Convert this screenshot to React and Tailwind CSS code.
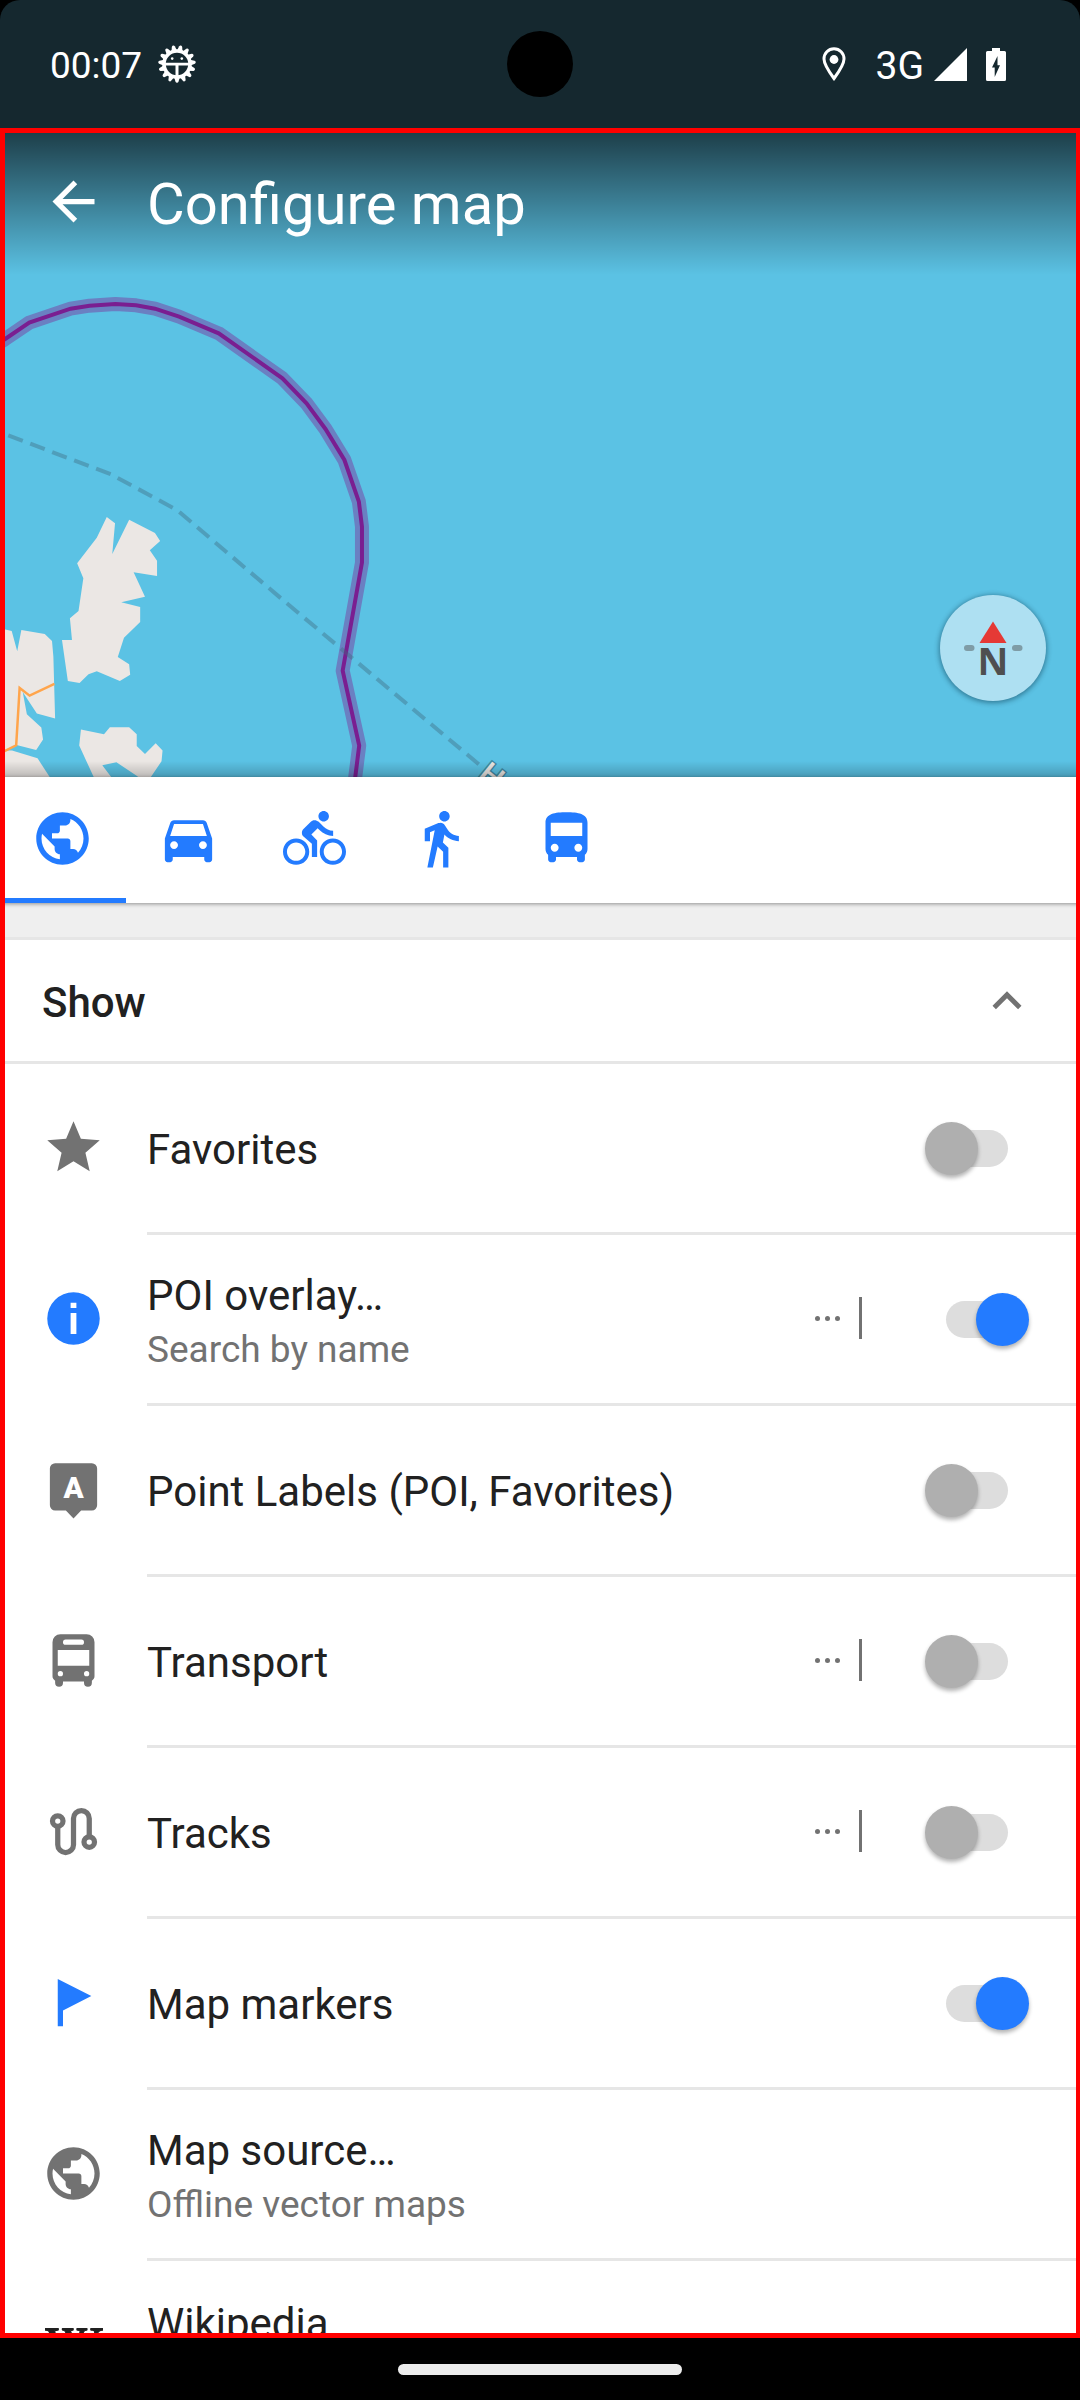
import { useState } from "react";
import {
  MdArrowBack,
  MdStar,
  MdPublic,
  MdDirectionsCar,
  MdDirectionsBike,
  MdDirectionsWalk,
  MdDirectionsBus,
  MdExpandLess,
} from "react-icons/md";
import { SiWikipedia } from "react-icons/si";

function BugIcon() {
  const teeth = Array.from({ length: 15 }, (_, i) => 90 + i * 24);
  return (
    <svg viewBox="0 0 38 38" className="size-[38px]" fill="#fff" aria-hidden="true">
      {teeth.map((a) => (
        <path key={a} d="M31 15.800L36.800 17.500a1.600 1.600 0 0 1 0 3L31 22.200z" transform={"rotate(" + a + " 19 19)"} />
      ))}
      <circle cx="19" cy="19" r="13" fill="none" stroke="#fff" strokeWidth="3.600" />
      <path d="M7 17.800h24v2.600H20.500V32h-3V20.400H7z" />
      <circle cx="14.200" cy="13.600" r="1.300" />
      <circle cx="23.800" cy="13.600" r="1.300" />
    </svg>
  );
}

function StatusBar() {
  return (
    <header className="relative flex h-[128px] shrink-0 items-center justify-between rounded-t-[20px] bg-[#15282f] pr-[74px] pb-[42px] pl-[50px] pt-[42px] text-white">
      <div className="flex items-center gap-4">
        <span className="pt-1 text-[37px] leading-[44px]">00:07</span>
        <BugIcon />
      </div>
      <div className="absolute left-1/2 top-[31px] size-[66px] -translate-x-1/2 rounded-full bg-black" />
      <div className="flex items-center">
        <svg viewBox="0 0 24 34" className="mr-[30px] h-[34px] w-6" aria-hidden="true">
          <path d="M12 1.800C6.300 1.800 2 6.300 2 12c0 5.600 4.500 12 10 19.500C17.500 24 22 17.600 22 12 22 6.300 17.700 1.800 12 1.800z" fill="none" stroke="#fff" strokeWidth="3" />
          <circle cx="12" cy="12.500" r="4.400" fill="#fff" />
        </svg>
        <span className="mr-[10px] pt-1 text-[39px] leading-[44px]">3G</span>
        <svg viewBox="0 0 33 33" className="mr-[19px] size-[33px]" aria-hidden="true">
          <path d="M0 33L33 0v33z" fill="#fff" />
        </svg>
        <svg viewBox="0 0 20 33" className="h-[33px] w-5" aria-hidden="true">
          <path d="M6 0h8v3h4.500A1.500 1.500 0 0 1 20 4.500v27a1.500 1.500 0 0 1-1.500 1.500h-17A1.500 1.500 0 0 1 0 31.500v-27A1.500 1.500 0 0 1 1.500 3H6z" fill="#fff" />
          <path d="M11.500 8v9.300H14L8.700 29v-9.500H6z" fill="#15282f" />
        </svg>
      </div>
    </header>
  );
}

const BORDER =
  "M-20 200L15 177 85 128 205 86 260 77 335 72 395 76 450 86 520 110 635 160 820 295 890 370 945 447 1000 540 1042 665 1051 740 1051 848 995 1172 1043 1397 1028 1520";

function MapCanvas() {
  return (
    <svg viewBox="0 0 1080 649" preserveAspectRatio="xMinYMin slice" className="h-full w-full" aria-hidden="true">
      <rect width="2400" height="1400" fill="#5bc2e4" />
      <g transform="translate(0 152) scale(0.3444 0.3333)">
        <g fill="#ebe7e4">
          <path d="M310 711L334 730 326 822 375 719 450 759 465 783 435 811 456 842V888L388 877 421 950 352 967 407 981V1026L360 1073 342 1131 375 1153 378 1184 348 1203 281 1174 257 1183 231 1209 197 1203 180 1080H209L203 1015 228 993 242 895 224 850 281 773z" />
          <path d="M0 1045L34 1053 50 1114 62 1050 130 1062 151 1083 155 1130 160 1316 107 1301 66 1236 78 1303 120 1343 125 1379 105 1410 48 1395 15 1410H0z" />
          <path d="M0 1412H35L109 1435 146 1494V1520H0z" />
          <path d="M235 1349L302 1363 319 1342H375L397 1363V1398L421 1422 452 1390 472 1412 469 1444 440 1488 420 1520H400V1490L338 1447 297 1456 325 1494V1520H285L230 1397z" />
        </g>
        <path d="M0 1420L47 1396 57 1224 86 1247 158 1212" fill="none" stroke="#ffa54c" strokeWidth="2.500" vectorEffect="non-scaling-stroke" />
        <path d={BORDER} fill="none" stroke="#6a80c2" strokeWidth="14" strokeLinejoin="round" vectorEffect="non-scaling-stroke" />
        <path d={BORDER} fill="none" stroke="#7a1e91" strokeWidth="4" vectorEffect="non-scaling-stroke" />
        <path d="M24 466L322 583 514 690 810 950 1410 1470" fill="none" stroke="#3f6a7d" strokeOpacity="0.400" strokeWidth="4" strokeDasharray="15.500 8" vectorEffect="non-scaling-stroke" />
      </g>
      <text x="477" y="649" transform="rotate(39 477 649)" fontFamily="Roboto, sans-serif" fontSize="30" fontWeight="500" fill="#ebe7e4" stroke="#3e8aa3" strokeWidth="3" paintOrder="stroke">
        H
      </text>
    </svg>
  );
}

function Compass() {
  return (
    <button type="button" aria-label="Rotate map north" className="absolute right-[34px] bottom-[76px] size-[106px] rounded-full bg-[#aee0f2] shadow-[0_1px_5px_1px_rgba(0,40,60,0.45)]">
      <svg viewBox="0 0 106 106" className="size-full" aria-hidden="true">
        <path d="M53 26.500L66.500 48h-27z" fill="#e53935" />
        <rect x="24" y="50" width="10.500" height="6" rx="3" fill="#7f9ca6" />
        <rect x="72" y="50" width="10.500" height="6" rx="3" fill="#7f9ca6" />
        <text x="53" y="80" textAnchor="middle" fontFamily="Open Sans, sans-serif" fontWeight="700" fontSize="38" fill="#4f4f4f">
          N
        </text>
      </svg>
    </button>
  );
}

const glyph = "size-[63px] shrink-0";

function InfoIcon() {
  return (
    <svg viewBox="0 0 24 24" className={glyph} fill="currentColor" aria-hidden="true">
      <path fillRule="evenodd" d="M12 2a10 10 0 1 0 0 20a10 10 0 1 0 0-20zM10.900 6h2.200v2h-2.200zM10.900 9.900h2.200v8h-2.200z" />
    </svg>
  );
}

function LabelIcon() {
  return (
    <svg viewBox="0 0 24 24" className={glyph} aria-hidden="true">
      <path d="M5 2h14a2 2 0 0 1 2 2v14a2 2 0 0 1-2 2h-4.100L12 23l-2.900-3H5a2 2 0 0 1-2-2V4a2 2 0 0 1 2-2z" fill="currentColor" />
      <text x="12" y="15.100" textAnchor="middle" fontFamily="Roboto, sans-serif" fontWeight="900" fontSize="11.300" fill="#fff">
        A
      </text>
    </svg>
  );
}

function TransportIcon() {
  return (
    <svg viewBox="0 0 24 24" className={glyph} fill="currentColor" aria-hidden="true">
      <path
        fillRule="evenodd"
        d="M7 2h10a3 3 0 0 1 3 3v13c0 .8-.4 1.300-1 1.700v.8a1.500 1.500 0 0 1-3 0V20H8v.5a1.500 1.500 0 0 1-3 0v-.8c-.6-.4-1-.9-1-1.700V5a3 3 0 0 1 3-3zM9 4a1 1 0 0 0 0 2h6a1 1 0 0 0 0-2zM6 8v6h12V8zM7 16a1 1 0 1 0 0 2a1 1 0 1 0 0-2zM17 16a1 1 0 1 0 0 2a1 1 0 1 0 0-2z"
      />
    </svg>
  );
}

function TracksIcon() {
  return (
    <svg viewBox="0 0 24 24" className={glyph} fill="none" stroke="currentColor" strokeWidth="2" aria-hidden="true">
      <circle cx="6" cy="8" r="2" />
      <circle cx="18" cy="16" r="2" />
      <path d="M6 10v7a3 3 0 0 0 6 0V7a3 3 0 0 1 6 0v7" />
    </svg>
  );
}

function FlagIcon() {
  return (
    <svg viewBox="0 0 24 24" className={glyph} fill="currentColor" aria-hidden="true">
      <path d="M6 3l12.800 6.500L8 15v6H6z" />
    </svg>
  );
}

function Switch({ id, checked, onChange }) {
  return (
    <input
      id={id}
      type="checkbox"
      role="switch"
      checked={checked}
      onChange={onChange}
      className="relative h-[53px] w-[104px] shrink-0 cursor-pointer appearance-none before:absolute before:left-[21px] before:top-2 before:h-[37px] before:w-[62px] before:rounded-full before:bg-[#dddddd] after:absolute after:left-0 after:top-0 after:size-[53px] after:rounded-full after:bg-[#afafaf] after:shadow-[0_3px_4px_rgba(0,0,0,0.3)] checked:after:left-[51px] checked:after:bg-[#237bff]"
    />
  );
}

const ITEMS = [
  { id: "favorites", title: "Favorites", icon: <MdStar className={glyph} />, toggle: true },
  { id: "poi", title: "POI overlay…", sub: "Search by name", icon: <InfoIcon />, toggle: true, more: true, tint: true },
  { id: "labels", title: "Point Labels (POI, Favorites)", icon: <LabelIcon />, toggle: true },
  { id: "transport", title: "Transport", icon: <TransportIcon />, toggle: true, more: true },
  { id: "tracks", title: "Tracks", icon: <TracksIcon />, toggle: true, more: true },
  { id: "markers", title: "Map markers", icon: <FlagIcon />, toggle: true, tint: true },
  { id: "source", title: "Map source…", sub: "Offline vector maps", icon: <MdPublic className={glyph} /> },
];

function Row({ item, checked, onToggle }) {
  const text = (
    <>
      <span className="block text-[42px] leading-[56px] text-[#212121]">{item.title}</span>
      {item.sub && <span className="block text-[37px] leading-[52px] text-[#727272]">{item.sub}</span>}
    </>
  );
  const textBox = item.sub ? "flex-1 pt-1.5 text-left" : "flex-1 pt-1 text-left";
  return (
    <li className="flex items-center pl-[42px]">
      <span className={item.tint ? "pb-[5px] text-[#237bff]" : "pb-[5px] text-[#727272]"}>{item.icon}</span>
      <div className="ml-[42px] flex h-[171px] min-w-0 flex-1 items-center border-b-[3px] border-[#e6e6e6] pr-[51px]">
        {item.toggle ? (
          <label htmlFor={item.id} className={textBox}>
            {text}
          </label>
        ) : (
          <button type="button" className={textBox}>
            {text}
          </button>
        )}
        {item.more && (
          <div className="mr-[63px] flex items-center pb-0.5">
            <button type="button" aria-label={item.title + " options"} className="flex size-[63px] items-center justify-center gap-[5px]">
              <i className="size-[5px] rounded-full bg-[#727272]" />
              <i className="size-[5px] rounded-full bg-[#727272]" />
              <i className="size-[5px] rounded-full bg-[#727272]" />
            </button>
            <span className="h-[42px] w-[3px] bg-[#727272]" />
          </div>
        )}
        {item.toggle && <Switch id={item.id} checked={checked} onChange={onToggle} />}
      </div>
    </li>
  );
}

const TABS = [
  { name: "Browse map", Icon: MdPublic },
  { name: "Driving", Icon: MdDirectionsCar },
  { name: "Cycling", Icon: MdDirectionsBike },
  { name: "Walking", Icon: MdDirectionsWalk },
  { name: "Public transport", Icon: MdDirectionsBus },
];

export default function App() {
  const [on, setOn] = useState({ poi: true, markers: true });
  const [tab, setTab] = useState(0);
  return (
    <div className="flex h-screen flex-col overflow-hidden bg-black font-['Roboto',sans-serif]">
      <StatusBar />
      <main className="relative flex min-h-0 flex-1 flex-col overflow-hidden bg-white">
        <section className="relative h-[649px] shrink-0 overflow-hidden bg-[#5bc2e4]">
          <MapCanvas />
          <div className="absolute inset-x-0 bottom-0 h-4 bg-linear-to-t from-black/20 to-transparent" />
          <div className="absolute inset-x-0 top-0 flex h-[147px] items-center bg-linear-to-b from-black/70 to-transparent pl-[42px] text-white">
            <button type="button" aria-label="Back">
              <MdArrowBack className="size-[63px]" />
            </button>
            <h1 className="ml-[42px] pt-1 text-[58px] leading-[68px]">Configure map</h1>
          </div>
          <Compass />
        </section>

        <nav className="relative z-10 flex h-[126px] shrink-0 bg-white shadow-[0_1px_4px_rgba(0,0,0,0.4)]">
          {TABS.map(({ name, Icon }, i) => (
            <button
              key={name}
              type="button"
              aria-label={name}
              aria-pressed={i === tab}
              onClick={() => setTab(i)}
              className={
                i === tab
                  ? "flex w-[126px] items-center justify-center pr-0.5 pb-[3px] text-[#237bff] shadow-[inset_0_-5px_0_#237bff]"
                  : "flex w-[126px] items-center justify-center pr-0.5 pb-[3px] text-[#237bff]"
              }
            >
              <Icon className="size-[63px]" />
            </button>
          ))}
        </nav>
        <div className="h-[37px] shrink-0 border-b-[3px] border-[#e6e6e6] bg-[#efefef]" />

        <button type="button" className="flex h-[124px] shrink-0 items-center justify-between border-b-[3px] border-[#e6e6e6] pr-11 pl-[42px] text-left">
          <span className="pt-1 text-[42px] font-medium leading-[56px] text-[#212121]">Show</span>
          <MdExpandLess className="size-[58px] text-[#727272]" />
        </button>

        <ul>
          {ITEMS.map((item) => (
            <Row key={item.id} item={item} checked={!!on[item.id]} onToggle={() => setOn({ ...on, [item.id]: !on[item.id] })} />
          ))}
          <li className="flex h-[168px] items-start gap-11 pl-[45px] pt-[35px]">
            <SiWikipedia className="mt-[22px] size-[58px] shrink-0 stroke-current stroke-[0.5px] text-[#212121]" />
            <span className="text-[42px] leading-[56px] text-[#212121]">Wikipedia</span>
          </li>
        </ul>

        <div className="pointer-events-none absolute inset-0 z-20 border-y-[5px] border-r-[4px] border-l-[5px] border-[#ff0000]" />
      </main>
      <footer className="flex h-[62px] shrink-0 items-center justify-center">
        <div className="h-[11px] w-[284px] rounded-full bg-[#ececec]" />
      </footer>
    </div>
  );
}
